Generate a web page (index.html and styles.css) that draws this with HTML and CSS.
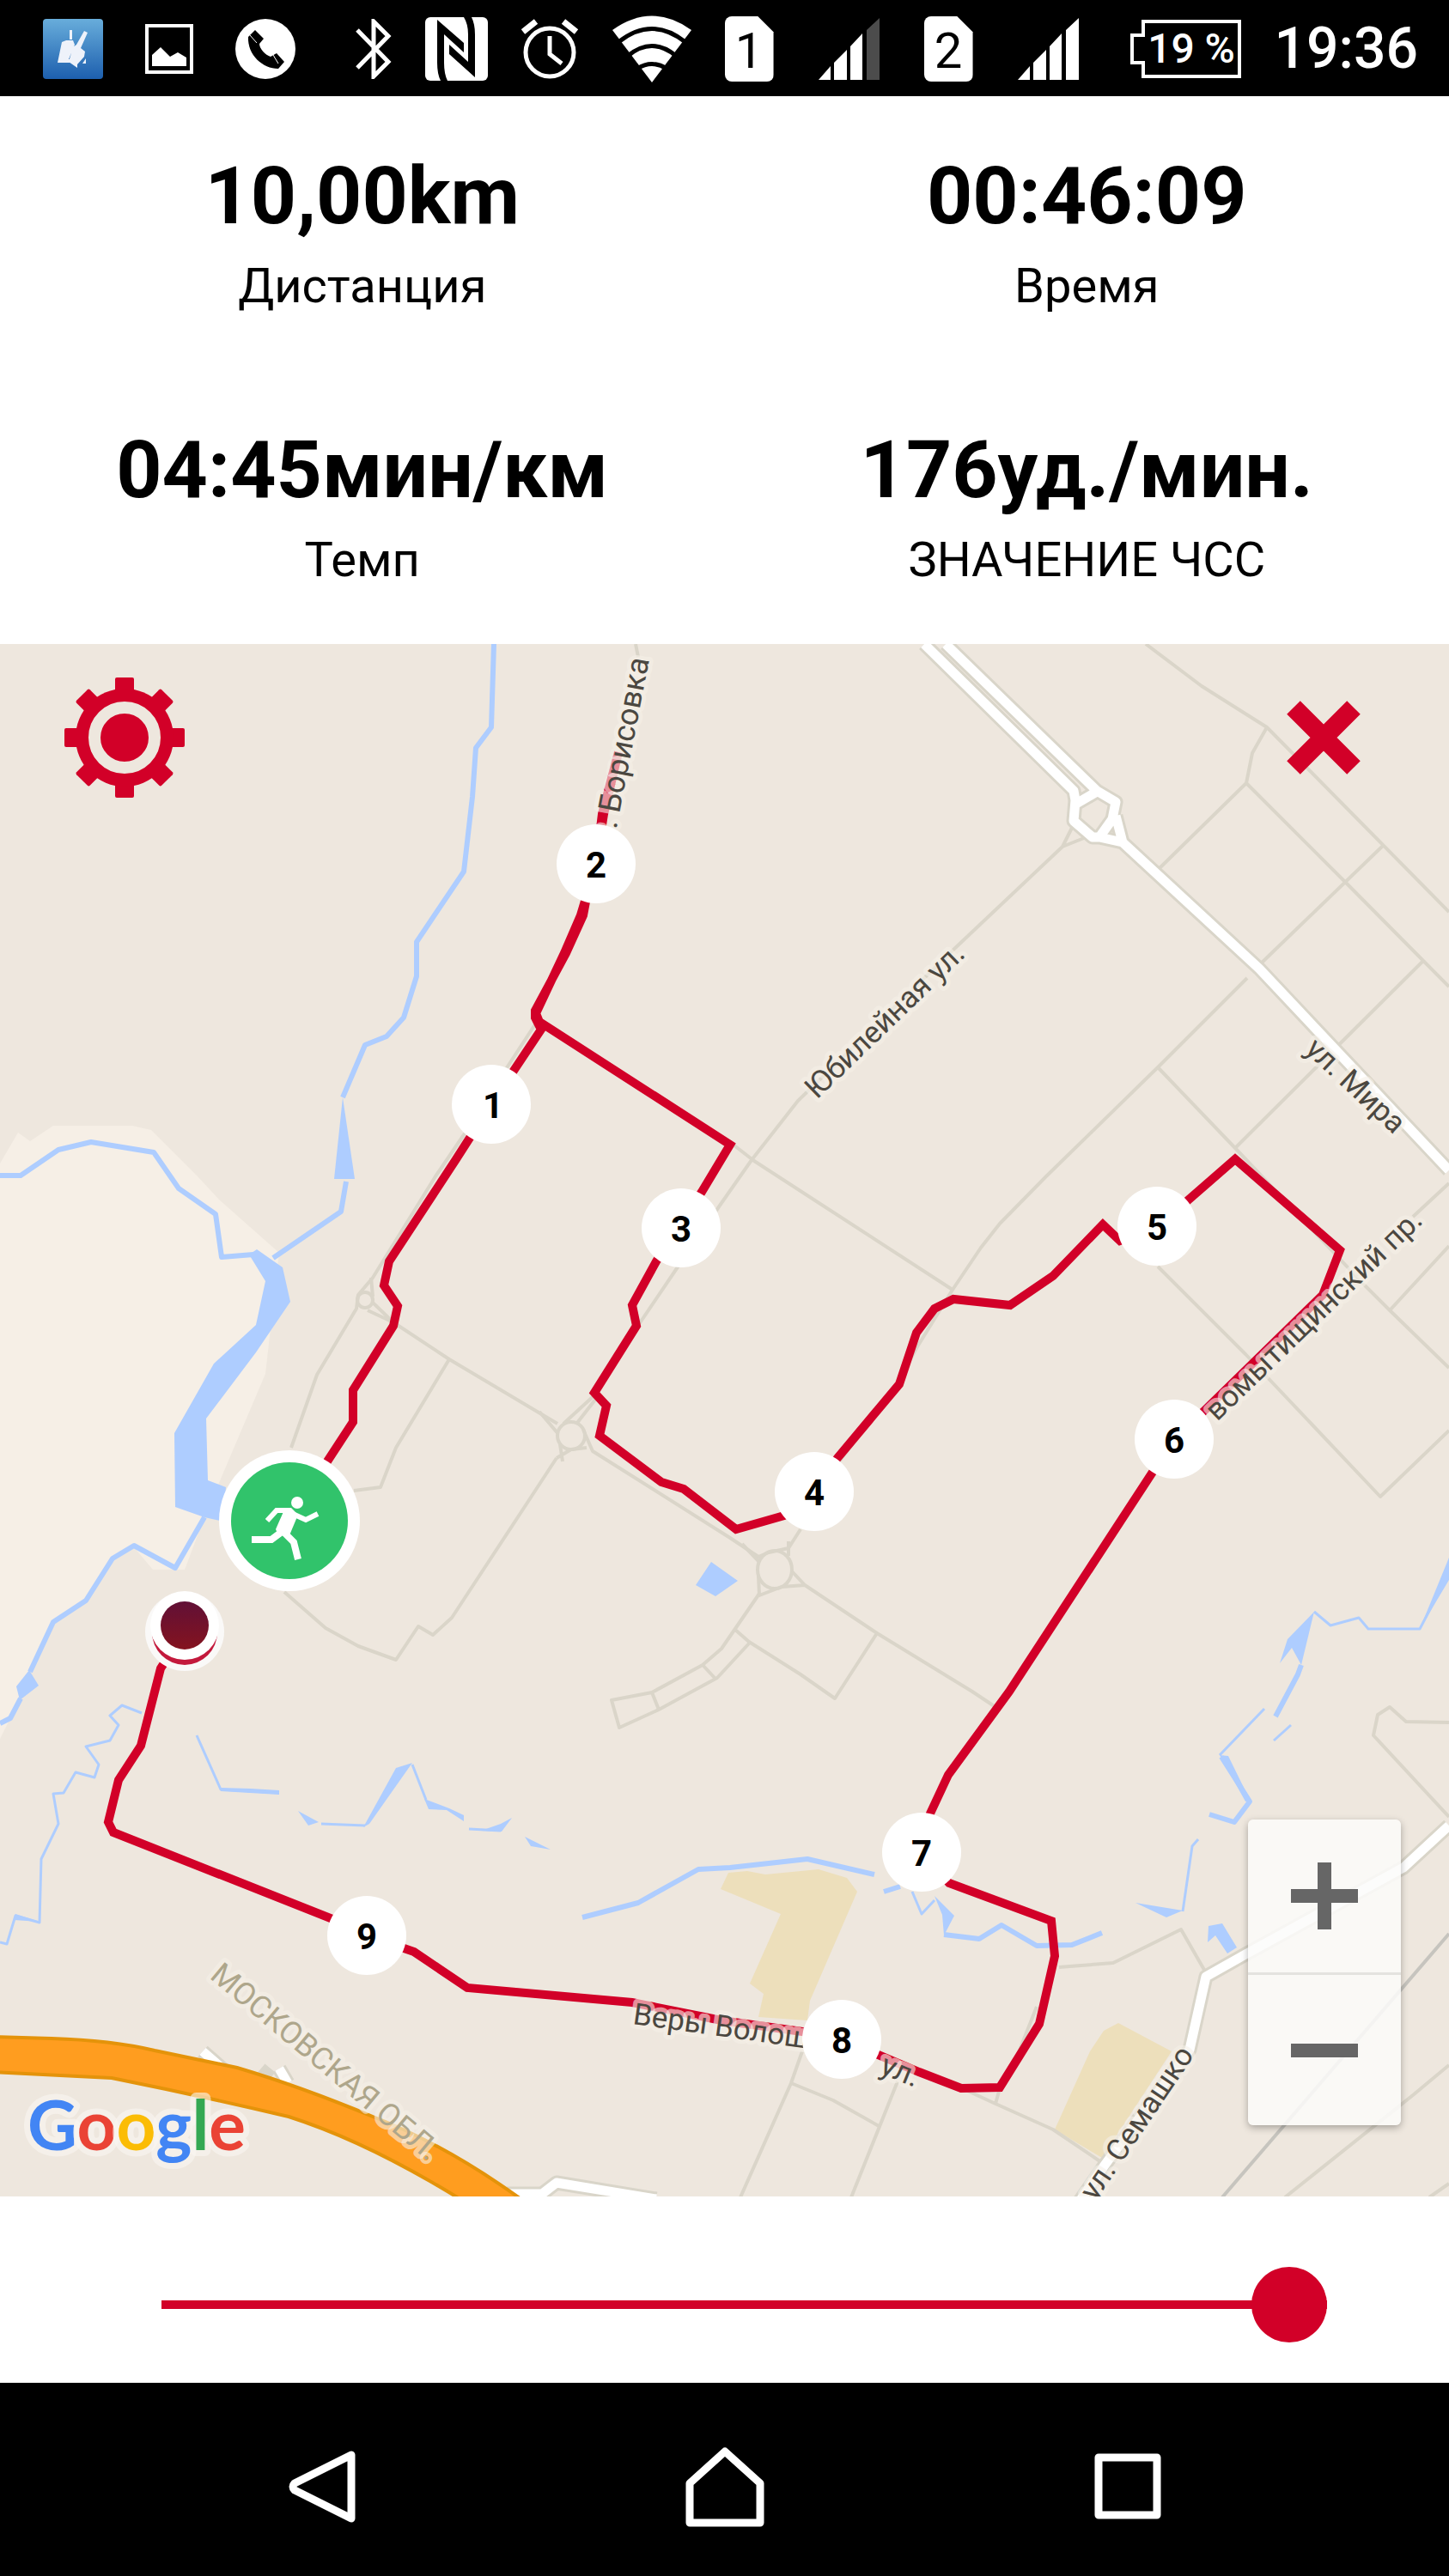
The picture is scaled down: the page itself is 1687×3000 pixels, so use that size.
FILE: index.html
```html
<!DOCTYPE html>
<html lang="ru">
<head>
<meta charset="UTF-8">
<meta name="viewport" content="width=device-width, initial-scale=1.0">
<title>Тренировка</title>
<link rel="stylesheet" href="styles.css">
</head>
<body>

<header class="status-bar">
  <div class="notifications">
    <svg width="70" height="72" viewBox="0 0 70 72">
      <defs>
        <linearGradient id="appBlue" x1="0" y1="0" x2="0" y2="1">
          <stop offset="0" stop-color="#68addb"/>
          <stop offset="1" stop-color="#1d5fae"/>
        </linearGradient>
      </defs>
      <rect y="1" width="70" height="70" rx="4" fill="url(#appBlue)"/>
      <path d="M31 14h3v11h-3zM22 28l5-2h8l2 5-7 17h5l-2 4H17zM48 15l4 2-8 18 5 4-1 6-8 9v4l-10-7 5-17 4-3zM46 53l4-6v6z" fill="#eef2fa"/>
    </svg>
    <svg width="56" height="58" viewBox="0 0 56 58">
      <rect x="2" y="2" width="52" height="54" fill="none" stroke="#fff" stroke-width="4"/>
      <path d="M8 49V36l10-9 11 11 9-5 10 6v10z" fill="#fff"/>
    </svg>
    <svg width="71" height="72" viewBox="0 0 71 72">
      <circle cx="35" cy="36" r="35" fill="#fff"/>
      <path d="M15 22l8-8 10 10-5 6c0 6 7 13 13 15l7-4 9 10-7 8C32 59 14 43 15 22z" fill="#000"/>
      <path d="M17 20l8 9M44 43l6 10" stroke="#fff" stroke-width="1"/>
    </svg>
  </div>

  <div class="system">
    <svg width="42" height="70" viewBox="0 0 42 70">
      <path d="M2 13l36 37-17 17V3l17 17L2 57" fill="none" stroke="#fff" stroke-width="5"/>
    </svg>
    <svg width="73" height="74" viewBox="0 0 73 74">
      <rect width="73" height="74" rx="6" fill="#fff"/>
      <path d="M14 3L45 30V41L22 20V53Q22 66 26 74H18Q14 66 14 53z" fill="#000"/>
      <path d="M58 70L28 43V32L50 52V20Q50 8 45 0H54Q58 8 58 20z" fill="#000"/>
    </svg>
    <svg width="67" height="70" viewBox="0 0 67 70">
      <g fill="none" stroke="#fff">
        <circle cx="33" cy="39" r="28" stroke-width="5"/>
        <path d="M33 20v21l14 11" stroke-width="5"/>
        <path d="M2 15L17 3M64 15L49 3" stroke-width="7"/>
      </g>
    </svg>
    <svg width="92" height="78" viewBox="0 0 92 78">
      <path d="M0 17Q46-16 92 17L46 78z" fill="#fff"/>
      <g fill="none" stroke="#000" stroke-width="5">
        <path d="M7 31Q46 0 85 31"/>
        <path d="M18 47Q46 24 74 47"/>
        <path d="M29 62Q46 51 63 62"/>
      </g>
    </svg>
    <div class="sims">
      <span class="sim">1</span>
      <svg width="71" height="72" viewBox="0 0 71 72">
        <path d="M0 72l14-16v16zM18 72V52l15-15v35zM37 72V33l14-15v54z" fill="#fff"/>
        <path d="M56 72V14L71 0v72z" fill="#4c4c4c"/>
      </svg>
      <span class="sim">2</span>
      <svg width="71" height="72" viewBox="0 0 71 72">
        <path d="M0 72l14-16v16zM18 72V52l15-15v35zM37 72V33l14-15v54zM56 72V14L71 0v72z" fill="#fff"/>
      </svg>
    </div>
    <span class="battery">
      <svg width="129" height="68" viewBox="0 0 129 68">
        <path d="M15 2h112v64H15V50H2V18h13z" fill="none" stroke="#fff" stroke-width="4"/>
      </svg>
      <span class="battery-text">19 %</span>
    </span>
    <time class="clock">19:36</time>
  </div>
</header>

<section class="stats">
  <div class="stat"><p class="value">10,00km</p><p class="label">Дистанция</p></div>
  <div class="stat"><p class="value">00:46:09</p><p class="label">Время</p></div>
  <div class="stat"><p class="value">04:45мин/км</p><p class="label">Темп</p></div>
  <div class="stat"><p class="value">176уд./мин.</p><p class="label">ЗНАЧЕНИЕ ЧСС</p></div>
</section>

<main class="map">
  <svg class="map-canvas" viewBox="0 750 1687 1808">
    <defs>
      <linearGradient id="finish" x1="0" y1="0" x2="0" y2="1">
        <stop offset="0" stop-color="#611036"/>
        <stop offset="1" stop-color="#84131f"/>
      </linearGradient>
    </defs>

    <!-- land -->
    <rect y="750" width="1687" height="1808" fill="#eee7de"/>
    <path fill="#f6efe6" d="M0 1355L21 1319L35 1329L62 1311H154L176 1316L230 1370L255 1397L325 1459L309 1600L238 1767L215 1828H178L156 1802L131 1815L100 1864L62 1889L35 1947L12 2001L0 2025z"/>
    <g fill="#eddfbb">
      <path d="M839 2200L848 2181L870 2179L891 2183L953 2177L986 2187L998 2203L943 2330L940 2353L883 2349L889 2322L873 2310L909 2229z"/>
      <path d="M1302 2356L1364 2389L1283 2513L1228 2480L1269 2389L1285 2365z"/>
    </g>

    <!-- water -->
    <g class="river">
      <path d="M575 750L572 847L554 871L550 928L540 1015L485 1097V1137L470 1185L450 1207L425 1217L399 1278"/>
      <path d="M403 1376L397 1411L318 1465"/>
      <path d="M0 1369H24L68 1339L106 1330L179 1342L208 1384L251 1414L258 1464L295 1461"/>
      <path d="M238 1767L204 1826L156 1800L131 1815L100 1864L62 1889L35 1947M24 1978L12 2001L0 2007"/>
      <path d="M678 2233L743 2216L813 2177L850 2175L940 2165L1018 2183"/>
      <path d="M1099 2253L1140 2258L1166 2242L1207 2266L1248 2265L1283 2251"/>
      <path d="M1408 2113L1437 2122L1455 2098L1422 2046"/>
      <path d="M1485 1999L1511 1950L1515 1939"/>
      <path d="M1029 2203L1048 2197"/>
    </g>
    <g class="creek">
      <path d="M165 1995L142 1986L128 1998L138 2009L128 2027L100 2034L115 2055L110 2070L88 2064L74 2088L62 2089L68 2124L48 2165L46 2239L18 2231L8 2264L0 2262"/>
      <path d="M229 2021L257 2084L325 2088"/>
      <path d="M374 2124L425 2126M480 2055L496 2096M546 2130L583 2132"/>
      <path d="M1062 2203L1073 2229L1088 2213"/>
      <path d="M1377 2226L1388 2150L1395 2142"/>
      <path d="M1420 2044L1472 1990M1483 2027L1503 2009"/>
      <path d="M1530 1877L1549 1893L1582 1884L1593 1897H1653L1687 1832"/>
    </g>
    <g fill="#aecdff">
      <path d="M399 1278L413 1373H389z"/>
      <path d="M290 1461L299 1455L329 1476L338 1516L298 1575L240 1652L242 1724L263 1732L260 1772L238 1767L204 1755L203 1669L249 1588L298 1543L309 1492z"/>
      <path d="M34 1945L45 1963L23 1980L19 1964z"/>
      <path d="M257 2082L292 2083L325 2085V2090L257 2086z"/>
      <path d="M347 2109L371 2122L359 2126z"/>
      <path d="M423 2128L461 2059L480 2053L430 2124z"/>
      <path d="M494 2095L523 2106L540 2114V2121L520 2108L499 2107z"/>
      <path d="M560 2132L583 2124L596 2117L584 2133z"/>
      <path d="M611 2139L641 2154L618 2150z"/>
      <path d="M18 2229L46 2238L16 2236z"/>
      <path d="M828 1819L859 1841L833 1859L810 1846z"/>
      <path d="M1088 2208L1111 2231L1099 2254L1097 2230z"/>
      <path d="M1322 2216L1377 2225L1358 2233z"/>
      <path d="M1407 2243L1423 2240L1440 2268L1429 2275L1415 2254L1406 2262z"/>
      <path d="M1530 1877L1499 1909L1490 1937L1504 1919L1515 1939z"/>
      <path d="M1653 1897L1687 1814V1840z"/>
      <path d="M1420 2044L1430 2045L1456 2098L1450 2098z"/>
    </g>

    <!-- side streets -->
    <g class="street">
      <path d="M1334 750L1399 799L1475 847L1687 1062"/>
      <path d="M1475 847L1458 877L1451 912L1348 1013M1451 912L1566 1027L1687 1149"/>
      <path d="M1610 985L1466 1124M1656 1120L1438 1337"/>
      <path d="M1452 1139L1348 1243L1218 1370L1164 1425L1142 1453L1109 1502"/>
      <path d="M1348 1243L1438 1337L1588 1496L1618 1526L1687 1593M1687 1451L1618 1526M1687 1378L1645 1417"/>
      <path d="M1250 960L1237 986L1262 976M1237 986L1110 1106L929 1282L875 1351L840 1401L786 1480L740 1548L692 1625L656 1658"/>
      <path d="M851 1331L878 1352L1109 1502L1067 1570L1040 1620L950 1737"/>
      <path d="M1348 1475L1450 1577L1607 1743L1687 1666"/>
      <path d="M740 750L743 765M623 1193L591 1242L539 1323L507 1370L434 1488L417 1508L415 1524L369 1601L339 1686"/>
      <path d="M432 1488L434 1510M434 1517L460 1542M428 1526L458 1540L523 1583L649 1658"/>
      <circle cx="425" cy="1514" r="9"/>
      <path d="M523 1583L461 1686L443 1732L412 1736"/>
      <circle cx="665" cy="1672" r="16"/>
      <path d="M628 1644L650 1670M655 1702L652 1682M648 1698L665 1688L683 1686M693 1630L672 1657"/>
      <path d="M648 1698L612 1753L526 1884L504 1904L487 1894L461 1933L417 1917L379 1896L331 1854"/>
      <path d="M679 1665L690 1690L850 1791L883 1813L895 1808L918 1803L932 1781"/>
      <ellipse cx="902" cy="1828" rx="20" ry="22"/>
      <path d="M864 1798L883 1818M918 1795L918 1812M883 1835L884 1858L910 1848L937 1846M922 1830L937 1846L1021 1902L1132 1970L1159 1988"/>
      <path d="M1021 1902L972 1978L932 1950L872 1912L856 1898"/>
      <path d="M884 1856L840 1920L818 1939L759 1971L712 1980L721 2012L767 1991L835 1954L872 1914M818 1939L832 1954M759 1971L767 1991"/>
      <path d="M1233 2291L1296 2286L1375 2247L1402 2294M1207 2337L1180 2405"/>
      <path d="M1120 2432L1159 2450L1226 2480L1285 2520M1159 2450L1164 2432"/>
      <path d="M934 2389L921 2426L862 2559M921 2426L970 2446L1025 2477M1045 2424L991 2559"/>
      <path d="M1687 2116L1599 2021L1604 1997L1618 1988L1637 2005L1687 2006"/>
      <path d="M1687 2405L1645 2440L1496 2559M1664 2559L1687 2543"/>
      <path class="railway" d="M1687 2252L1423 2559"/>
    </g>

    <!-- main streets -->
    <g class="main-casing">
      <path d="M1076 750L1250 921L1252 932L1250 956L1272 975H1280L1295 954L1299 934L1277 921L1101 750M1299 950L1307 981L1466 1128L1687 1363M1277 922L1253 936M1280 975L1307 981"/>
      <path d="M1687 2126L1634 2175L1450 2276L1404 2302L1385 2387L1285 2523L1256 2565"/>
      <path d="M590 2555H631L648 2542L764 2561M236 2389L262 2412M325 2409L335 2426M303 2410L315 2420"/>
    </g>
    <g class="main-road">
      <path d="M1076 750L1250 921L1252 932L1250 956L1272 975H1280L1295 954L1299 934L1277 921L1101 750M1299 950L1307 981L1466 1128L1687 1363M1277 922L1253 936M1280 975L1307 981"/>
      <path d="M1687 2126L1634 2175L1450 2276L1404 2302L1385 2387L1285 2523L1256 2565"/>
      <path d="M590 2555H631L648 2542L764 2561M236 2389L262 2412M325 2409L335 2426"/>
    </g>
    <path d="M-10 2372L60 2374Q130 2376 180 2388L276 2408Q350 2430 434 2465Q520 2498 612 2565H542Q430 2495 336 2465Q230 2440 130 2420L-10 2413z" fill="#ff9d1f" stroke="#e4930a" stroke-width="4"/>

    <!-- track -->
    <path class="track" d="M337 1771L381 1702L411 1656V1619L458 1544L463 1521L447 1497L453 1469L531 1350L572 1286L630 1199L623 1185V1177L659 1110L679 1066L682 1050L694 1006L703 948L720 876L701 948L694 1006L676 1066L657 1110L624 1180L628 1190L850 1333L817 1388L764 1469L736 1520L741 1544L692 1622L706 1637L698 1672L770 1726L796 1734L857 1781L913 1765L948 1737L975 1698L1047 1612L1067 1552L1088 1524L1110 1513L1176 1520L1226 1486L1284 1426L1304 1445L1347 1430L1384 1397L1438 1350L1560 1456L1540 1508L1402 1643L1367 1676L1175 1970L1104 2067L1083 2112L1073 2158L1105 2193L1224 2237L1228 2278L1210 2357L1164 2431L1119 2432L1070 2413L980 2375L934 2366L840 2353L736 2332L544 2315L482 2273L427 2254L385 2234L132 2134L126 2122L138 2073L164 2033L187 1943L215 1900"/>

    <!-- street names -->
    <g class="names">
      <text class="long" transform="translate(756 768) rotate(-79)" text-anchor="end">г. Борисовка</text>
      <text transform="translate(951 1281) rotate(-44)">Юбилейная ул.</text>
      <text transform="translate(1518 1224) rotate(43)">ул. Мира</text>
      <text transform="translate(1417 1656) rotate(-44)">вомытищинский пр.</text>
      <text transform="translate(1391 2393) rotate(-56)" text-anchor="end">ул. Семашко</text>
      <text transform="translate(736 2357) rotate(8)">Веры Волош</text>
      <text transform="translate(1023 2414) rotate(22)">ул.</text>
      <text class="long region" transform="translate(243 2303) rotate(40)">МОСКОВСКАЯ ОБЛ.</text>
    </g>

    <!-- kilometre marks -->
    <g class="marks">
      <circle cx="694" cy="1006" r="46"/><text x="694" y="1022">2</text>
      <circle cx="572" cy="1286" r="46"/><text x="574" y="1302">1</text>
      <circle cx="793" cy="1430" r="46"/><text x="793" y="1446">3</text>
      <circle cx="948" cy="1737" r="46"/><text x="948" y="1753">4</text>
      <circle cx="1347" cy="1428" r="46"/><text x="1347" y="1444">5</text>
      <circle cx="1367" cy="1676" r="46"/><text x="1367" y="1692">6</text>
      <circle cx="1073" cy="2157" r="46"/><text x="1073" y="2173">7</text>
      <circle cx="980" cy="2375" r="46"/><text x="980" y="2391">8</text>
      <circle cx="427" cy="2254" r="46"/><text x="427" y="2270">9</text>
    </g>

    <!-- start -->
    <circle cx="337" cy="1771" r="82" fill="#fff"/>
    <circle cx="337" cy="1771" r="68" fill="#31c36b"/>
    <circle cx="346" cy="1750" r="7" fill="#fff"/>
    <g fill="none" stroke="#fff">
      <path d="M311 1771L322 1759H337M343 1764L356 1770L370 1763" stroke-width="6"/>
      <path d="M328 1784L316 1793H293" stroke-width="8"/>
      <path d="M330 1784L342 1796L347 1816" stroke-width="8"/>
    </g>
    <path d="M332 1756H339L347 1764L337 1788H324L321 1781z" fill="#fff"/>

    <!-- finish -->
    <circle cx="215" cy="1900" r="46" fill="#faf9f8"/>
    <circle cx="215" cy="1901" r="38" fill="#c3193c"/>
    <circle cx="215" cy="1893" r="40" fill="#fff"/>
    <circle cx="215" cy="1893" r="28" fill="url(#finish)"/>

    <text class="google" x="32" y="2504"><tspan fill="#4285f4">G</tspan><tspan fill="#ea4335">o</tspan><tspan fill="#fbbc05">o</tspan><tspan fill="#4285f4">g</tspan><tspan fill="#34a853">l</tspan><tspan fill="#ea4335">e</tspan></text>
  </svg>

  <button class="map-button settings" aria-label="Настройки">
    <svg width="142" height="142" viewBox="-71 -71 142 142">
      <g fill="#d20028">
        <rect x="-11" y="-70" width="22" height="140" rx="2"/>
        <rect x="-11" y="-70" width="22" height="140" rx="2" transform="rotate(45)"/>
        <rect x="-11" y="-70" width="22" height="140" rx="2" transform="rotate(90)"/>
        <rect x="-11" y="-70" width="22" height="140" rx="2" transform="rotate(135)"/>
        <circle r="57"/>
      </g>
      <circle r="35" fill="#d20028" stroke="#eee7de" stroke-width="14"/>
    </svg>
  </button>
  <button class="map-button close" aria-label="Закрыть">
    <svg width="86" height="86" viewBox="0 0 86 86">
      <path d="M8 8l70 70M78 8L8 78" stroke="#d20028" stroke-width="22"/>
    </svg>
  </button>

  <div class="zoom">
    <button class="zoom-button" aria-label="Приблизить">
      <svg width="78" height="78" viewBox="0 0 78 78"><path d="M39 0v78M0 39h78" stroke="#666" stroke-width="16"/></svg>
    </button>
    <button class="zoom-button" aria-label="Отдалить">
      <svg width="78" height="78" viewBox="0 0 78 78"><path d="M0 39h78" stroke="#666" stroke-width="16"/></svg>
    </button>
  </div>
</main>

<div class="player">
  <input class="progress" type="range" min="0" max="100" value="100" aria-label="Позиция на маршруте">
</div>

<nav class="nav-bar">
  <button class="nav-button" aria-label="Назад">
    <svg width="80" height="94" viewBox="0 0 80 94"><path d="M74 10v74L8 51q-4-4 0-8z" fill="none" stroke="#fff" stroke-width="9" stroke-linejoin="round"/></svg>
  </button>
  <button class="nav-button" aria-label="Домой">
    <svg width="92" height="94" viewBox="0 0 92 94"><path d="M46 6L5 43v46h82V43z" fill="none" stroke="#fff" stroke-width="9" stroke-linejoin="round"/></svg>
  </button>
  <button class="nav-button" aria-label="Недавние">
    <svg width="78" height="94" viewBox="0 0 78 94"><rect x="5" y="13" width="68" height="67" fill="none" stroke="#fff" stroke-width="9" stroke-linejoin="round"/></svg>
  </button>
</nav>

</body>
</html>
```
FILE: styles.css
```css
* {
  box-sizing: border-box;
}
body {
  margin: 0;
  font-family: Roboto, "Noto Sans", sans-serif;
  background-color: #fff;
  color: #000;
}
p {
  margin: 0;
}
svg {
  display: block;
}
button {
  padding: 0;
  border: none;
  background: none;
  cursor: pointer;
}

/* Status bar */
.status-bar {
  display: flex;
  justify-content: space-between;
  align-items: center;
  height: 112px;
  padding: 2px 36px 0 50px;
  background-color: #000;
  color: #fff;
}
.notifications {
  display: flex;
  align-items: center;
  gap: 49px;
}
.system {
  display: flex;
  align-items: center;
  gap: 39px;
}
.sims {
  display: flex;
  align-items: center;
  gap: 52px;
}
.sim {
  width: 57px;
  height: 76px;
  border-radius: 8px;
  background-color: #fff;
  color: #000;
  font-size: 58px;
  line-height: 80px;
  text-align: center;
  clip-path: polygon(0 0, 68% 0, 100% 24%, 100% 100%, 0 100%);
}
.battery {
  position: relative;
  margin-left: 21px;
}
.battery-text {
  position: absolute;
  inset: 0 0 0 14px;
  font-size: 48px;
  font-weight: 500;
  line-height: 68px;
  text-align: center;
  white-space: nowrap;
}
.clock {
  font-size: 66px;
  font-weight: 500;
  line-height: 76px;
}

/* Workout numbers */
.stats {
  display: grid;
  grid-template-columns: 1fr 1fr;
}
.stat {
  padding: 62px 16px 65px;
  text-align: center;
}
.value {
  font-size: 93px;
  line-height: 110px;
  font-weight: bold;
}
.label {
  margin-top: 16px;
  font-size: 56px;
  line-height: 66px;
}

/* Map */
.map {
  position: relative;
}
.map-canvas {
  width: 100%;
  height: auto;
}
.river,
.creek,
.street,
.main-casing,
.main-road {
  fill: none;
  stroke-linejoin: round;
}
.river {
  stroke: #aecdff;
  stroke-width: 6;
}
.creek {
  stroke: #aecdff;
  stroke-width: 3;
}
.street {
  stroke: #dad5c9;
  stroke-width: 4;
}
.railway {
  stroke: #c6c4be;
}
.main-casing {
  stroke: #d9d5c9;
  stroke-width: 17;
}
.main-road {
  stroke: #fff;
  stroke-width: 11;
}
.track {
  fill: none;
  stroke: #d20028;
  stroke-width: 10;
}
.names {
  font-size: 35px;
  fill: #4b4740;
  stroke: rgba(246, 241, 232, 0.6);
  stroke-width: 10;
  stroke-linejoin: round;
  paint-order: stroke;
}
.long {
  font-size: 36px;
}
.region {
  fill: #aea68b;
}
.marks {
  fill: #fff;
}
.marks text {
  fill: #000;
  font-size: 42px;
  font-weight: bold;
  text-anchor: middle;
}
.google {
  font-family: Lato, sans-serif;
  font-size: 80px;
  font-weight: bold;
  stroke: rgba(250, 247, 242, 0.6);
  stroke-width: 14;
  stroke-linejoin: round;
  paint-order: stroke;
}
.map-button {
  position: absolute;
}
.settings {
  top: 38px;
  left: 74px;
}
.close {
  top: 66px;
  right: 103px;
}
.zoom {
  position: absolute;
  right: 56px;
  bottom: 83px;
  width: 178px;
  border-radius: 6px;
  background-color: rgba(252, 252, 250, 0.85);
  box-shadow: 0 3px 8px rgba(0, 0, 0, 0.3);
}
.zoom-button {
  display: flex;
  justify-content: center;
  align-items: center;
  width: 100%;
  height: 178px;
}
.zoom-button + .zoom-button {
  border-top: 3px solid #e4e3df;
}

/* Route slider */
.player {
  display: flex;
  padding: 82px 142px 47px 188px;
}
.progress {
  width: 100%;
  height: 88px;
  margin: 0;
  background: linear-gradient(#d20028, #d20028) center / 100% 10px no-repeat;
  -webkit-appearance: none;
  appearance: none;
}
.progress::-webkit-slider-thumb {
  -webkit-appearance: none;
  width: 88px;
  height: 88px;
  border-radius: 50%;
  background-color: #d20028;
}

/* Navigation bar */
.nav-bar {
  display: flex;
  height: 225px;
  padding: 16px 140px 0;
  background-color: #000;
}
.nav-button {
  display: flex;
  flex: 1;
  justify-content: center;
  align-items: center;
}
```
